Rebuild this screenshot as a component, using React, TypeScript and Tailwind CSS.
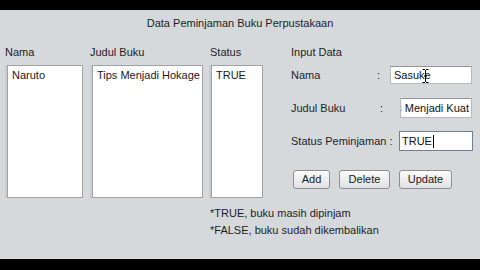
import React from 'react';

const font = { fontFamily: '"Liberation Sans", Arial, sans-serif' };

const ListBox: React.FC<{ item: string; width: string; offset: string }> = ({ item, width, offset }) => (
    <div className={`${offset} ${width} h-[133px] bg-white border border-[#9ea3a8] shadow-[-2px_0_0_#c9ccd1] px-[4px] pt-[2px] text-[11px] leading-[14px] text-[#1a1a1a] whitespace-nowrap overflow-hidden`}>
        {item}
    </div>
);

const Field: React.FC<{ width: string; focused?: boolean; children: React.ReactNode }> = ({ width, focused, children }) => (
    <div
        className={`relative ${width} h-full bg-white border ${
            focused ? 'border-[#6f7f8f] border-[1.5px]' : 'border-[#b4bac1] border-t-[#8e959c]'
        } flex items-center overflow-hidden text-[11px] text-[#111] whitespace-nowrap`}
    >
        {children}
    </div>
);

const Button: React.FC<{ label: string; width: string }> = ({ label, width }) => (
    <button className={`${width} h-[19px] rounded-[3px] border border-[#8a8f95] bg-gradient-to-b from-[#fbfbfb] to-[#dfe1e4] shadow-[inset_0_1px_0_#ffffff] text-[11px] leading-[17px] text-[#1a1a1a] text-center`}>
        {label}
    </button>
);

export default function App() {
    return (
        <div className="w-[480px] h-[270px] flex flex-col bg-black overflow-hidden" style={font}>
            <div className="h-[10px] bg-black" />
            <div className="flex-1 bg-[#d6d9dc] flex flex-col text-[#1e1e1e]">
                <div className="pt-[6px] h-[20px] text-center text-[11px] leading-[14px]">
                    Data Peminjaman Buku Perpustakaan
                </div>
                <div className="mt-[15px] flex">
                    <div className="ml-[5px] w-[85px] flex flex-col">
                        <span className="text-[11px] leading-[14px]">Nama</span>
                        <div className="mt-[6px]">
                            <ListBox item="Naruto" width="w-[76px]" offset="ml-[2px]" />
                        </div>
                    </div>
                    <div className="w-[120px] flex flex-col">
                        <span className="text-[11px] leading-[14px]">Judul Buku</span>
                        <div className="mt-[6px]">
                            <ListBox item="Tips Menjadi Hokage" width="w-[111px]" offset="ml-[2px]" />
                        </div>
                    </div>
                    <div className="w-[81px] flex flex-col">
                        <span className="text-[11px] leading-[14px]">Status</span>
                        <div className="mt-[6px]">
                            <ListBox item="TRUE" width="w-[52px]" offset="ml-[1px]" />
                        </div>
                        <div className="mt-[8px] flex flex-col gap-[3px] text-[11px] leading-[14px] whitespace-nowrap">
                            <span>*TRUE, buku masih dipinjam</span>
                            <span>*FALSE, buku sudah dikembalikan</span>
                        </div>
                    </div>
                    <div className="flex flex-col text-[11px] leading-[14px]">
                        <span>Input Data</span>
                        <div className="mt-[7px] h-[18px] flex items-center">
                            <span className="w-[86px]">Nama</span>
                            <span className="w-[13px]">:</span>
                            <Field width="w-[82px]">
                                <span className="pl-[3px]">Sasuke</span>
                                <svg className="absolute left-[31px] top-[2px]" width="7" height="14" viewBox="0 0 7 14">
                                    <path d="M0.5 0.5h2.5M4 0.5h2.5M3.5 1v12M0.5 13.5h2.5M4 13.5h2.5M2 7h3" stroke="#000" strokeWidth="1" fill="none" />
                                </svg>
                            </Field>
                        </div>
                        <div className="mt-[14px] h-[20px] flex items-center">
                            <span className="w-[89px]">Judul Buku</span>
                            <span className="w-[20px]">:</span>
                            <Field width="w-[72px]">
                                <div className="w-full flex justify-end pr-[2px]">
                                    <span>Tips Menjadi Kuat</span>
                                </div>
                            </Field>
                        </div>
                        <div className="mt-[13px] h-[20px] flex items-center">
                            <span className="w-[108px]">Status Peminjaman :</span>
                            <Field width="w-[74px]" focused>
                                <span className="pl-[2px]">TRUE</span>
                                <span className="ml-[1px] w-[1px] h-[13px] bg-black" />
                            </Field>
                        </div>
                        <div className="mt-[19px] ml-[2px] flex gap-[9px]">
                            <Button label="Add" width="w-[37px]" />
                            <Button label="Delete" width="w-[51px]" />
                            <Button label="Update" width="w-[53px]" />
                        </div>
                    </div>
                </div>
            </div>
            <div className="h-[11px] bg-black" />
        </div>
    );
}
